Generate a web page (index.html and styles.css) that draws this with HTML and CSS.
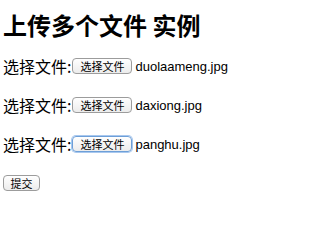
FILE: index.html
```html
<!DOCTYPE html>
<html>
<head>
<meta charset="utf-8">
<link rel="stylesheet" href="styles.css">
</head>
<body>
<h1 class="title">上传多个文件 实例</h1>
<form class="form">
  <div class="row"><span class="label">选择文件:</span><span class="btn">选择文件</span><span class="fname">duolaameng.jpg</span></div>
  <div class="row"><span class="label">选择文件:</span><span class="btn">选择文件</span><span class="fname">daxiong.jpg</span></div>
  <div class="row"><span class="label">选择文件:</span><span class="btn focus">选择文件</span><span class="fname">panghu.jpg</span></div>
  <div class="row"><span class="btn submit">提交</span></div>
</form>
</body>
</html>
```
FILE: styles.css
```css
html, body {
  margin: 0;
  padding: 0;
  background: #fff;
}
body {
  padding: 0 0 0 3px;
  font-family: "Noto Sans CJK SC", "Liberation Sans", sans-serif;
  color: #000;
}
.title {
  margin: 0;
  padding-top: 11px;
  font-size: 24px;
  line-height: 28px;
  font-weight: bold;
}
.form {
  margin-top: 17px;
  display: flex;
  flex-direction: column;
  gap: 19px;
}
.row {
  display: flex;
  align-items: center;
  height: 20px;
}
.label {
  font-size: 16px;
  line-height: 20px;
}
.btn {
  box-sizing: border-box;
  height: 16px;
  width: 60px;
  margin-left: 1px;
  display: flex;
  align-items: center;
  justify-content: center;
  font-size: 11px;
  line-height: 14px;
  border: 1px solid #9c9c9c;
  border-radius: 4px;
  background: linear-gradient(#ffffff, #ececec);
}
.btn.focus {
  border-color: #6d9fd8;
  box-shadow: 0 0 0 1px #a9c8ee;
}
.btn.submit {
  width: 37px;
  margin-left: 0;
}
.fname {
  margin-left: 3px;
  font-family: "Liberation Sans", sans-serif;
  font-size: 13px;
}
```
